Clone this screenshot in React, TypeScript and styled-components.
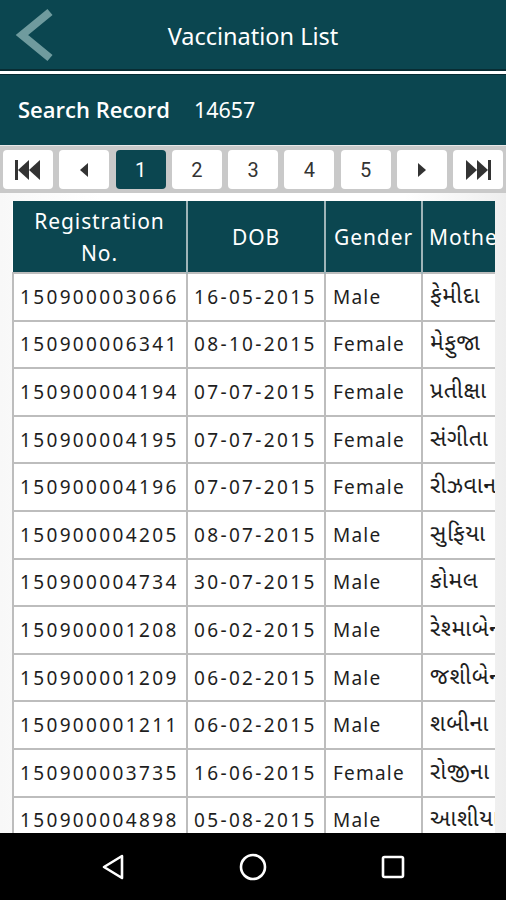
import React from "react";
import styled, { createGlobalStyle } from "styled-components";

const TEAL = "#0b4650";

const GlobalStyle = createGlobalStyle`
  html, body { margin: 0; padding: 0; background: #f4f4f4; }
  body { font-family: "Noto Sans", "Open Sans", "DejaVu Sans", sans-serif; }
  * { box-sizing: border-box; }
`;

const Screen = styled.div`
  width: 506px;
  height: 900px;
  display: flex;
  flex-direction: column;
  overflow: hidden;
  background: #f6f6f6;
`;

const TitleBar = styled.header`
  height: 69px;
  flex: none;
  background: ${TEAL};
  display: grid;
  grid-template-columns: 70px 1fr 70px;
  align-items: center;
`;

const BackButton = styled.div`
  display: flex;
  align-items: center;
  padding-left: 14px;
  height: 100%;
`;

const Title = styled.h1`
  margin: 0;
  text-align: center;
  color: #ffffff;
  font-size: 23.5px;
  font-weight: 400;
  padding-top: 2px;
`;

const Divider = styled.div`
  height: 6px;
  flex: none;
  background: #ffffff;
  border-top: 2px solid #082c33;
  border-bottom: 1px solid #082c33;
`;

const SearchBar = styled.div`
  height: 71px;
  flex: none;
  background: ${TEAL};
  display: flex;
  align-items: center;
  gap: 24px;
  padding: 0 0 2px 18px;
  color: #ffffff;
  font-size: 21.5px;
  border-bottom: 1px solid #e8e8e8;
`;

const SearchLabel = styled.span`
  font-family: "Open Sans", "Noto Sans", sans-serif;
  font-weight: 600;
  font-size: 22px;
`;

const Pager = styled.nav`
  flex: none;
  height: 47px;
  background: #c9c9c9;
  display: flex;
  align-items: center;
  gap: 6.25px;
  padding: 0 3px;
`;

const PageButton = styled.div<{ $active?: boolean }>`
  width: 50px;
  height: 39px;
  border-radius: 4px;
  background: ${(p) => (p.$active ? TEAL : "#ffffff")};
  color: ${(p) => (p.$active ? "#ffffff" : "#333333")};
  display: flex;
  align-items: center;
  justify-content: center;
  font-size: 20px;
  font-family: "Roboto", "Noto Sans", sans-serif;
`;

const Content = styled.main`
  flex: 1;
  min-height: 0;
  overflow: hidden;
  padding: 8px 0 0 12px;
  background: linear-gradient(to right, #f8f8f8, #ffffff 20%, #ffffff 80%, #eeeeee);
`;

const TableWrap = styled.div`
  width: 483px;
  overflow: hidden;
`;

const Table = styled.table`
  border-collapse: collapse;
  table-layout: fixed;
  width: 530px;
  background: #ffffff;
`;

const HeadCell = styled.th<{ $w: number }>`
  width: ${(p) => p.$w}px;
  height: 72px;
  background: ${TEAL};
  color: #ffffff;
  font-weight: 400;
  font-size: 21px;
  letter-spacing: 0.9px;
  line-height: 32px;
  text-align: center;
  padding: 0 4px;
  border-left: 2px solid #9fb4b8;
  white-space: nowrap;
  &:first-child { border-left: none; }
`;

const HeadRightCell = styled(HeadCell)`
  text-align: left;
  padding-left: 6px;
`;

const Cell = styled.td<{ $num?: boolean }>`
  height: 47.6px;
  padding: 0 0 0 ${(p) => (p.$num ? 6 : 7)}px;
  border: 2px solid #bdbdbd;
  color: #1e1e1e;
  font-size: 19px;
  letter-spacing: ${(p) => (p.$num ? 2.35 : 1.2)}px;
  white-space: nowrap;
  overflow: hidden;
  vertical-align: middle;
`;

const GujCell = styled(Cell)`
  font-family: "Noto Sans Gujarati", "Lohit Gujarati", "Noto Sans", sans-serif;
  letter-spacing: 0.6px;
  font-size: 23px;
`;

const NavBar = styled.footer`
  height: 67px;
  flex: none;
  background: #000000;
  display: flex;
  align-items: center;
  justify-content: center;
`;

const NavSlot = styled.div`
  width: 140px;
  display: flex;
  justify-content: center;
`;

type Row = [string, string, string, string];

const rows: Row[] = [
  ["150900003066", "16-05-2015", "Male", "ફેમીદા"],
  ["150900006341", "08-10-2015", "Female", "મેફુજા"],
  ["150900004194", "07-07-2015", "Female", "પ્રતીક્ષા"],
  ["150900004195", "07-07-2015", "Female", "સંગીતા"],
  ["150900004196", "07-07-2015", "Female", "રીઝવાના"],
  ["150900004205", "08-07-2015", "Male", "સુફિયા"],
  ["150900004734", "30-07-2015", "Male", "કોમલ"],
  ["150900001208", "06-02-2015", "Male", "રેશ્માબેન"],
  ["150900001209", "06-02-2015", "Male", "જશીબેન"],
  ["150900001211", "06-02-2015", "Male", "શબીના"],
  ["150900003735", "16-06-2015", "Female", "રોજીના"],
  ["150900004898", "05-08-2015", "Male", "આશીયા"],
];

const ChevronLeft = () => (
  <svg width="40" height="56" viewBox="0 0 40 56">
    <polyline points="36,5 8,28 36,51" fill="none" stroke="#6f9b9e" strokeWidth="8" strokeLinejoin="miter" />
  </svg>
);

const FirstIcon = () => (
  <svg width="28" height="22" viewBox="0 0 28 22">
    <rect x="1" y="1" width="3" height="20" fill="#333" />
    <polygon points="15,1 4,11 15,21" fill="#333" />
    <polygon points="26,1 15,11 26,21" fill="#333" />
  </svg>
);

const LastIcon = () => (
  <svg width="28" height="22" viewBox="0 0 28 22">
    <polygon points="2,1 13,11 2,21" fill="#333" />
    <polygon points="13,1 24,11 13,21" fill="#333" />
    <rect x="24" y="1" width="3" height="20" fill="#333" />
  </svg>
);

const PrevIcon = () => (
  <svg width="10" height="14" viewBox="0 0 10 14">
    <polygon points="9,0 1,7 9,14" fill="#333" />
  </svg>
);

const NextIcon = () => (
  <svg width="10" height="14" viewBox="0 0 10 14">
    <polygon points="1,0 9,7 1,14" fill="#333" />
  </svg>
);

const NavBack = () => (
  <svg width="26" height="28" viewBox="0 0 26 28">
    <polygon points="22,3 4,14 22,25" fill="none" stroke="#fff" strokeWidth="2.6" strokeLinejoin="round" />
  </svg>
);

const NavHome = () => (
  <svg width="30" height="30" viewBox="0 0 30 30">
    <circle cx="15" cy="15" r="12" fill="none" stroke="#fff" strokeWidth="2.6" />
  </svg>
);

const NavRecent = () => (
  <svg width="26" height="26" viewBox="0 0 26 26">
    <rect x="3" y="3" width="20" height="20" rx="1.5" fill="none" stroke="#fff" strokeWidth="2.6" />
  </svg>
);

export default function App() {
  return (
    <>
      <GlobalStyle />
      <Screen>
        <TitleBar>
          <BackButton>
            <ChevronLeft />
          </BackButton>
          <Title>Vaccination List</Title>
          <div />
        </TitleBar>
        <Divider />
        <SearchBar>
          <SearchLabel>Search Record</SearchLabel>
          <span>14657</span>
        </SearchBar>
        <Pager>
          <PageButton><FirstIcon /></PageButton>
          <PageButton><PrevIcon /></PageButton>
          <PageButton $active>1</PageButton>
          <PageButton>2</PageButton>
          <PageButton>3</PageButton>
          <PageButton>4</PageButton>
          <PageButton>5</PageButton>
          <PageButton><NextIcon /></PageButton>
          <PageButton><LastIcon /></PageButton>
        </Pager>
        <Content>
          <TableWrap>
            <Table>
              <thead>
                <tr>
                  <HeadCell $w={174}>Registration<br />No.</HeadCell>
                  <HeadCell $w={138}>DOB</HeadCell>
                  <HeadCell $w={97}>Gender</HeadCell>
                  <HeadRightCell $w={121}>Mother</HeadRightCell>
                </tr>
              </thead>
              <tbody>
                {rows.map((r) => (
                  <tr key={r[0]}>
                    <Cell $num>{r[0]}</Cell>
                    <Cell $num>{r[1]}</Cell>
                    <Cell>{r[2]}</Cell>
                    <GujCell>{r[3]}</GujCell>
                  </tr>
                ))}
              </tbody>
            </Table>
          </TableWrap>
        </Content>
        <NavBar>
          <NavSlot><NavBack /></NavSlot>
          <NavSlot><NavHome /></NavSlot>
          <NavSlot><NavRecent /></NavSlot>
        </NavBar>
      </Screen>
    </>
  );
}
